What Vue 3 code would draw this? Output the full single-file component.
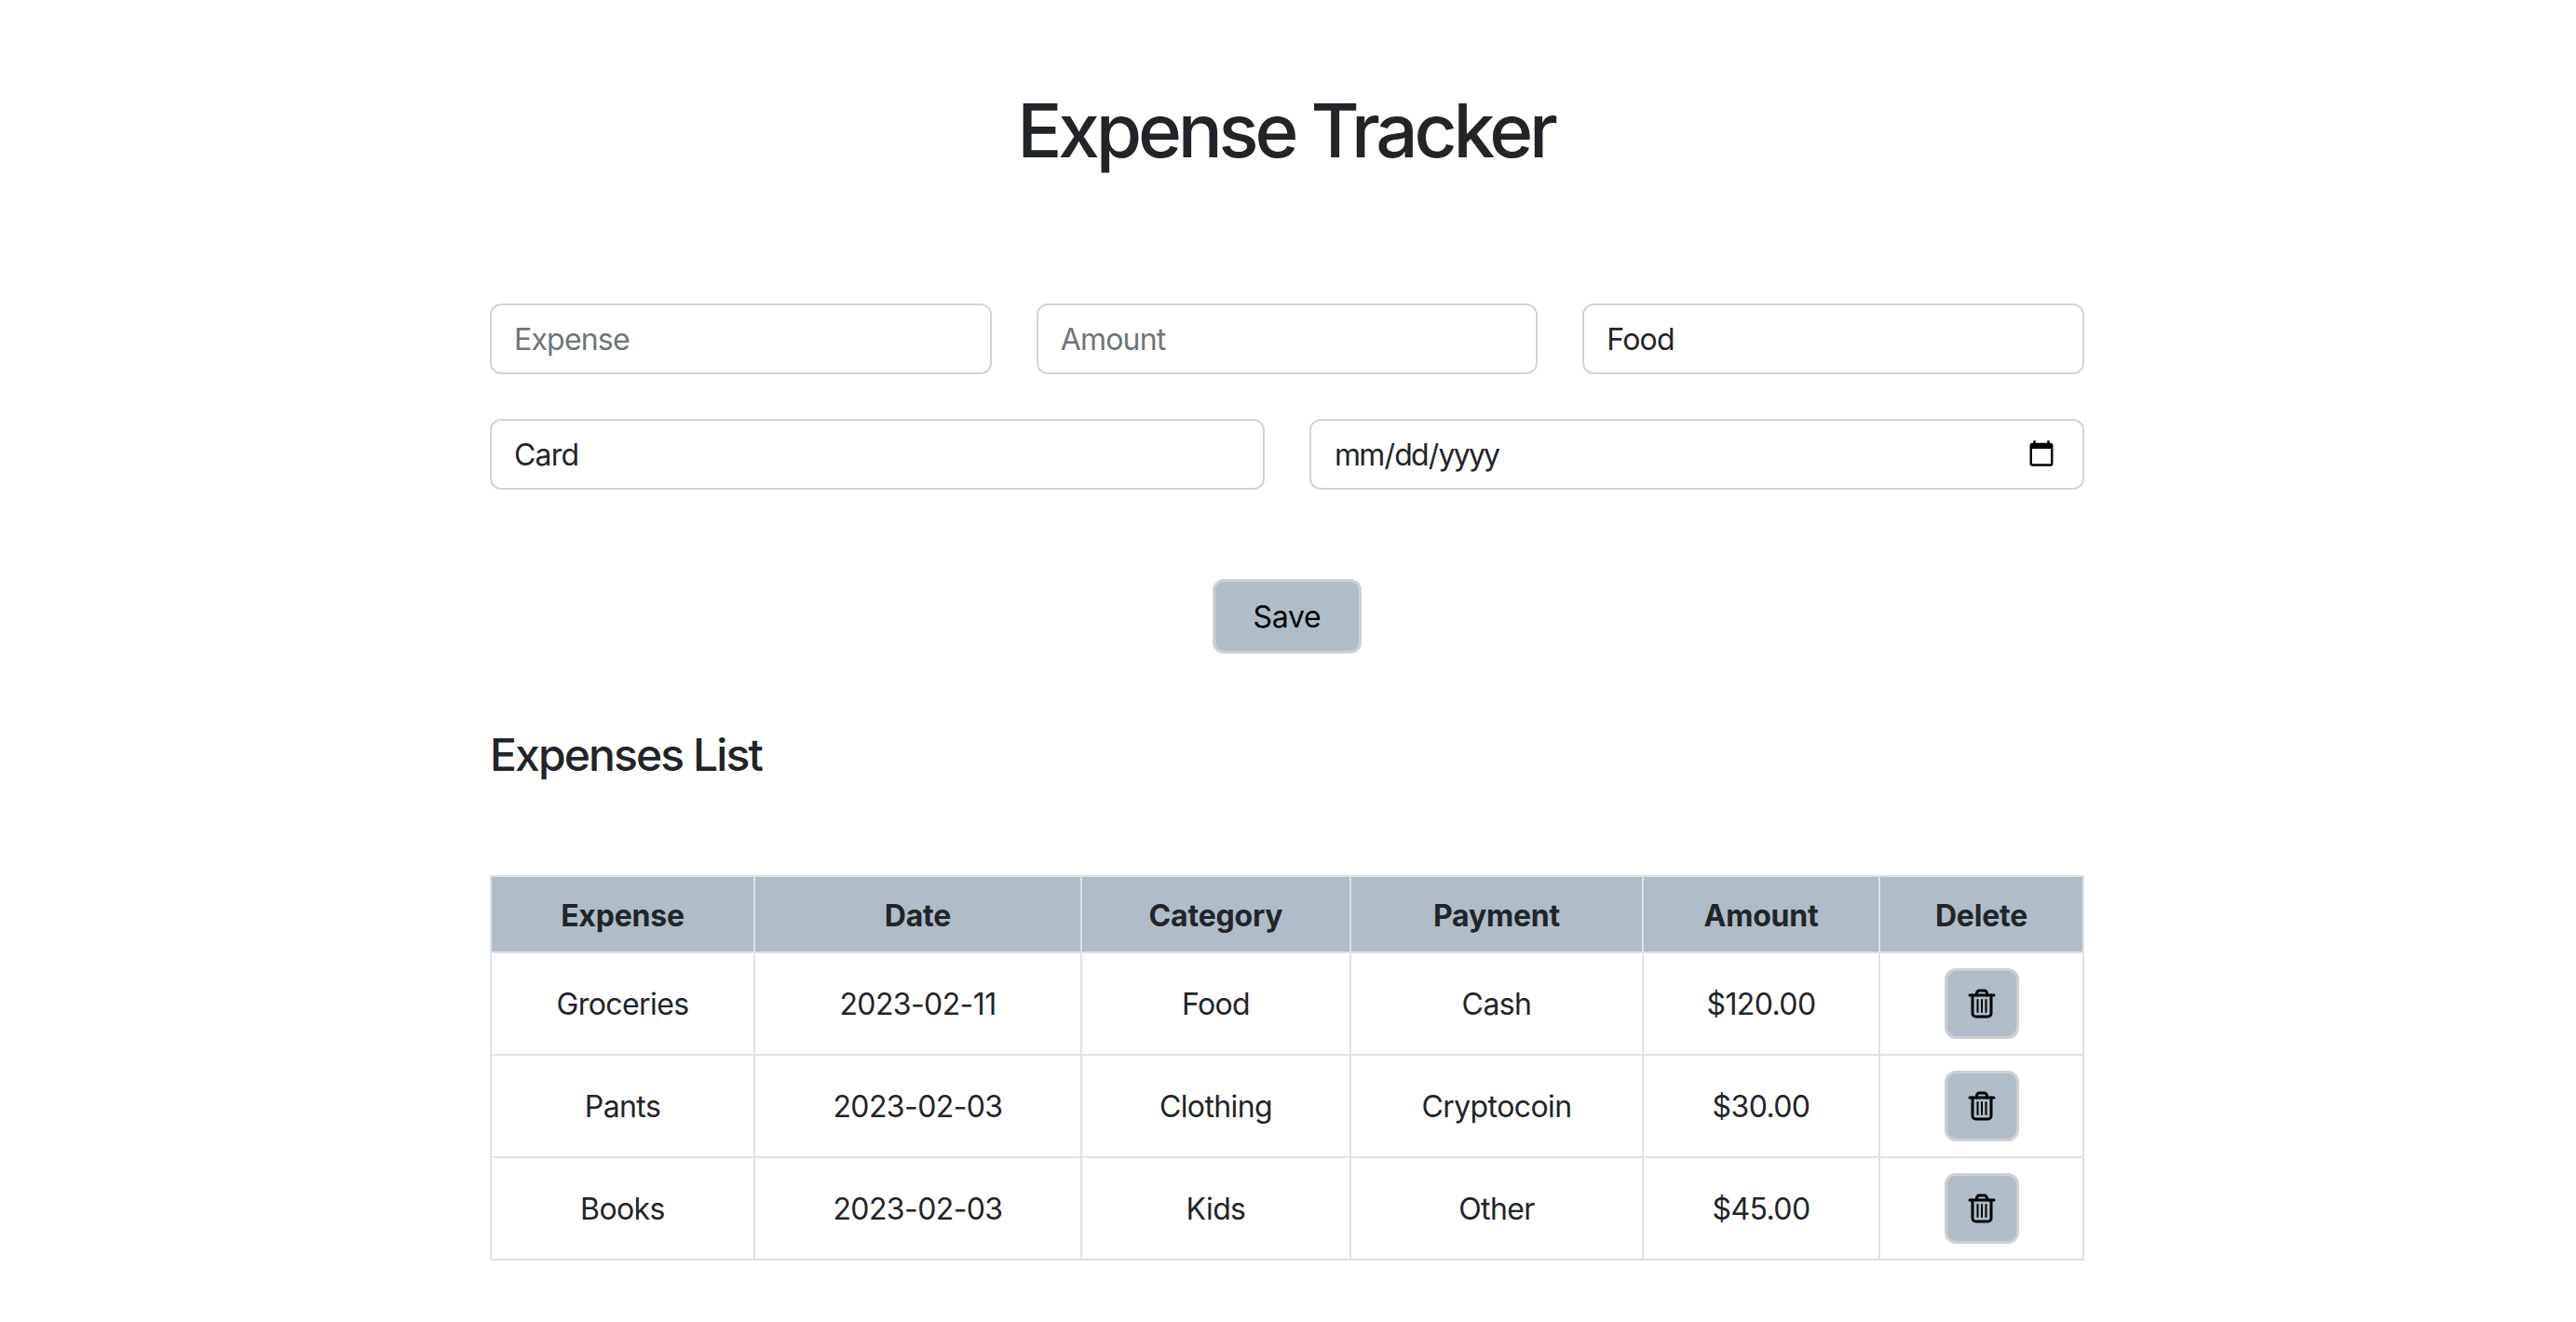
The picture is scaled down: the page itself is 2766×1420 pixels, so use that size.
<template>
  <div class="shell">
    <div class="page">
      <h1 class="title">Expense Tracker</h1>

      <form class="expense-form" @submit.prevent>
        <div class="row">
          <input class="field" type="text" placeholder="Expense" />
          <input class="field" type="text" placeholder="Amount" />
          <select class="field">
            <option v-for="c in categories" :key="c">{{ c }}</option>
          </select>
        </div>
        <div class="row">
          <select class="field">
            <option v-for="p in payments" :key="p">{{ p }}</option>
          </select>
          <input class="field date-field" type="date" />
        </div>
        <div class="actions">
          <button class="btn save-btn" type="submit">Save</button>
        </div>
      </form>

      <h3 class="subtitle">Expenses List</h3>

      <table class="expenses">
        <colgroup>
          <col v-for="w in columnWidths" :key="w" :style="{ width: w + 'px' }" />
        </colgroup>
        <thead>
          <tr>
            <th v-for="h in headers" :key="h">{{ h }}</th>
          </tr>
        </thead>
        <tbody>
          <tr v-for="row in expenses" :key="row.name">
            <td class="text-cell">{{ row.name }}</td>
            <td class="text-cell">{{ row.date }}</td>
            <td class="text-cell">{{ row.category }}</td>
            <td class="text-cell">{{ row.payment }}</td>
            <td class="text-cell">{{ row.amount }}</td>
            <td>
              <button class="btn delete-btn" type="button" aria-label="Delete">
                <svg width="32" height="32" viewBox="0 0 32 32" fill="none" stroke="#000" stroke-width="3" stroke-linecap="round" stroke-linejoin="round">
                  <path d="M3 7h26" />
                  <path d="M10.5 7V5A3 3 0 0 1 13.5 2h5a3 3 0 0 1 3 3v2" />
                  <path d="M6 7v19.5a3.5 3.5 0 0 0 3.5 3.5h13a3.5 3.5 0 0 0 3.5-3.5V7" />
                  <path d="M11.5 12v13M16 12v13M20.5 12v13" stroke-width="2" />
                </svg>
              </button>
            </td>
          </tr>
        </tbody>
      </table>
    </div>
  </div>
</template>

<script setup>
const categories = ['Food', 'Clothing', 'Kids']
const payments = ['Card', 'Cash', 'Cryptocoin', 'Other']
const headers = ['Expense', 'Date', 'Category', 'Payment', 'Amount', 'Delete']
const columnWidths = [283, 351, 289, 314, 254, 219]

const expenses = [
  { name: 'Groceries', date: '2023-02-11', category: 'Food', payment: 'Cash', amount: '$120.00' },
  { name: 'Pants', date: '2023-02-03', category: 'Clothing', payment: 'Cryptocoin', amount: '$30.00' },
  { name: 'Books', date: '2023-02-03', category: 'Kids', payment: 'Other', amount: '$45.00' }
]
</script>

<style>
html,
body {
  margin: 0;
  background: #fff;
}
</style>

<style scoped>
.shell {
  width: 2764px;
}

.page {
  width: 1712px;
  margin: 0 auto;
  padding-top: 92px;
  font-family: Inter, "Liberation Sans", sans-serif;
  color: #212529;
}

.title {
  margin: 0 0 138px;
  padding-right: 3px;
  font-size: 80px;
  font-weight: 500;
  line-height: 1.2;
  letter-spacing: -4.2px;
  text-align: center;
}

.expense-form {
  display: flex;
  flex-direction: column;
  gap: 48px;
}

.row {
  display: flex;
  gap: 48px;
}

.field {
  flex: 1 1 0;
  min-width: 0;
  box-sizing: border-box;
  height: 76px;
  padding: 12px 24px;
  border: 2px solid #ced4da;
  border-radius: 12px;
  background: #fff;
  font-family: inherit;
  font-size: 32px;
  letter-spacing: -0.8px;
  color: #212529;
  appearance: none;
}

.field::placeholder {
  color: #6c757d;
}

.date-field {
  letter-spacing: -1.8px;
}

input[type="date"]::-webkit-calendar-picker-indicator {
  width: 32px;
  height: 32px;
  margin: 0 4px 0 0;
  padding: 0;
}

.actions {
  display: flex;
  justify-content: center;
  margin-top: 48px;
}

.btn {
  box-sizing: border-box;
  display: flex;
  align-items: center;
  justify-content: center;
  border: 3px solid #d0d0d0;
  border-radius: 12px;
  background: #b0bcc8;
  font-family: inherit;
  color: #000;
}

.save-btn {
  width: 160px;
  height: 80px;
  font-size: 32px;
  letter-spacing: -0.3px;
}

.delete-btn {
  width: 80px;
  height: 76px;
  margin: 0 auto;
  padding: 0;
}

.subtitle {
  margin: 80px 0 0;
  font-size: 48px;
  font-weight: 500;
  line-height: 1.2;
  letter-spacing: -1.9px;
}

.expenses {
  width: 100%;
  margin-top: 100px;
  border-collapse: collapse;
  table-layout: fixed;
  font-size: 32px;
  text-align: center;
}

.expenses th,
.expenses td {
  border: 2px solid #dee2e6;
  padding: 8px 16px;
  vertical-align: middle;
}

.expenses th {
  height: 64px;
  padding: 10px 16px 6px;
  background: #b0bcc8;
  font-weight: 700;
  letter-spacing: -0.2px;
}

.expenses td {
  height: 92px;
  letter-spacing: -0.6px;
}

.expenses .text-cell {
  padding: 9px 16px 7px;
}
</style>
